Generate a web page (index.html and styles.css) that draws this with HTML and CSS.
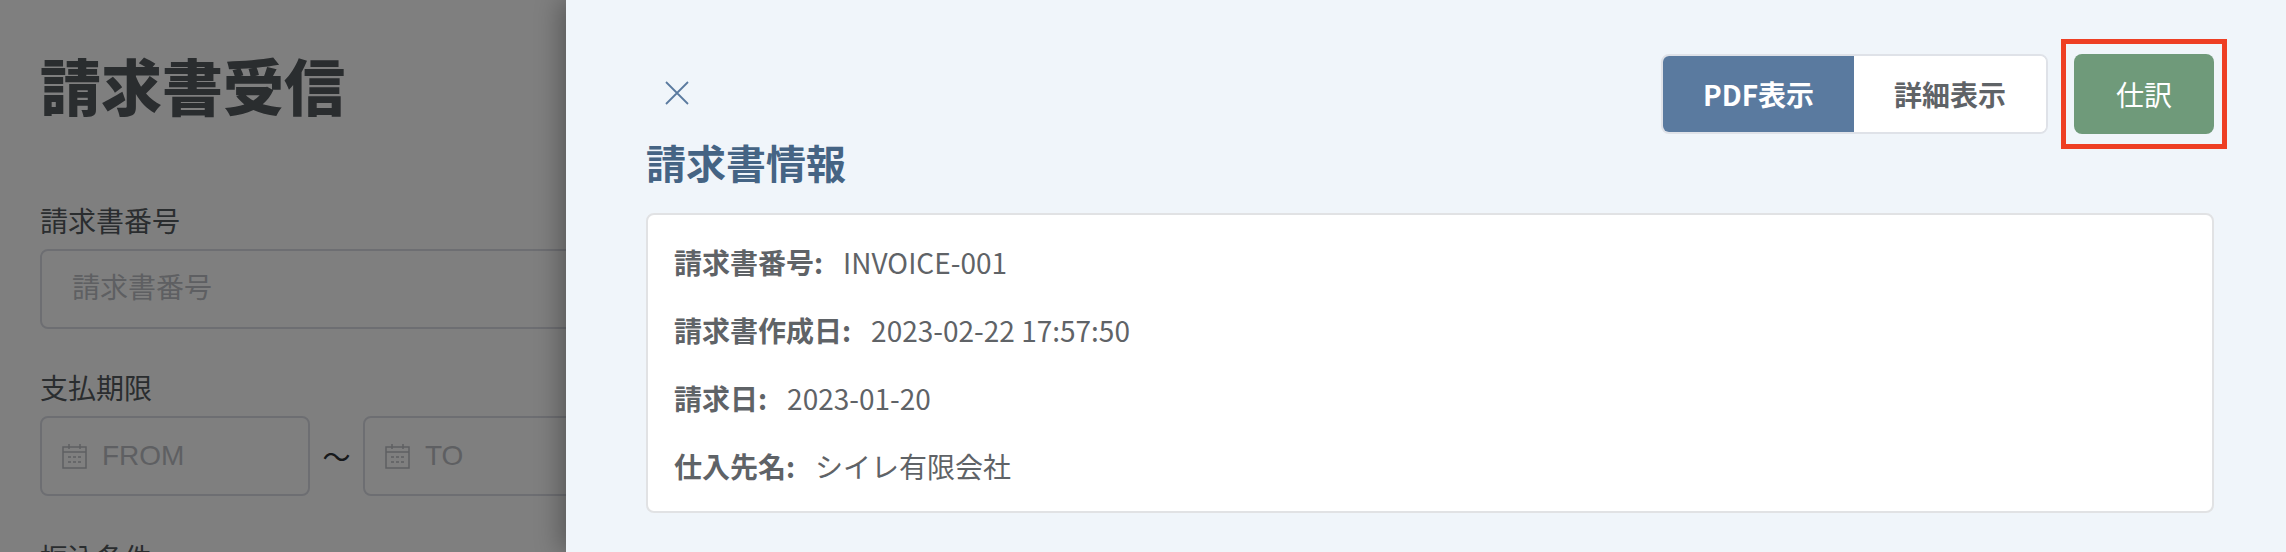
FILE: index.html
```html
<!DOCTYPE html>
<html lang="ja">
<head>
    <meta charset="UTF-8">
    <title>請求書受信</title>
    <link rel="stylesheet" href="styles.css">
</head>
<body>
    <!-- Search form behind the drawer -->
    <section class="page">
        <h1>請求書受信</h1>
        <label class="field-label">請求書番号</label>
        <div class="input wide"><span>請求書番号</span></div>
        <label class="field-label">支払期限</label>
        <div class="date-row">
            <div class="input date">
                <svg class="cal" viewBox="0 0 25 25" fill="none" stroke="currentColor" stroke-width="1.5">
                    <rect x="1" y="3" width="23" height="21"/>
                    <path d="M1 8h23M7 0v5M18 0v5"/>
                    <path d="M6 13h3M11 13h3M16 13h3M6 18h3M11 18h3M16 18h3" stroke-width="1.4"/>
                </svg>
                <span class="latin">FROM</span>
            </div>
            <span class="tilde">〜</span>
            <div class="input date grow">
                <svg class="cal" viewBox="0 0 25 25" fill="none" stroke="currentColor" stroke-width="1.5">
                    <rect x="1" y="3" width="23" height="21"/>
                    <path d="M1 8h23M7 0v5M18 0v5"/>
                    <path d="M6 13h3M11 13h3M16 13h3M6 18h3M11 18h3M16 18h3" stroke-width="1.4"/>
                </svg>
                <span class="latin">TO</span>
            </div>
        </div>
        <label class="field-label">振込条件</label>
        <div class="scrim"></div>
    </section>

    <!-- Drawer -->
    <aside class="drawer">
        <div class="drawer-head">
            <button class="close" aria-label="閉じる">
                <svg viewBox="0 0 24 24" fill="none" stroke="currentColor" stroke-width="1.8">
                    <path d="M1 1l22 22M23 1L1 23"/>
                </svg>
            </button>
            <div class="actions">
                <div class="toggle">
                    <button class="toggle-btn active">PDF表示</button>
                    <button class="toggle-btn">詳細表示</button>
                </div>
                <div class="highlight">
                    <button class="journal">仕訳</button>
                </div>
            </div>
        </div>
        <h2>請求書情報</h2>
        <div class="card">
            <p><b>請求書番号:</b><span>INVOICE-001</span></p>
            <p><b>請求書作成日:</b><span>2023-02-22 17:57:50</span></p>
            <p><b>請求日:</b><span>2023-01-20</span></p>
            <p><b>仕入先名:</b><span>シイレ有限会社</span></p>
        </div>
    </aside>
</body>
</html>
```

FILE: styles.css
```css
* {
    box-sizing: border-box;
}
body {
    margin: 0;
    height: 552px;
    display: flex;
    overflow: hidden;
    font-family: "Noto Sans CJK JP", "Noto Sans", sans-serif;
    background: #fff;
}

/* Page behind the drawer */
.page {
    position: relative;
    flex: 0 0 566px;
    height: 552px;
    overflow: hidden;
    padding: 43px 0 0 40px;
    color: #555a5e;
}
h1 {
    margin: 0 0 73px;
    font-size: 61px;
    line-height: 84px;
    font-weight: 900;
}
.field-label {
    display: block;
    font-size: 28px;
    line-height: 40px;
    margin-bottom: 9px;
}
.input {
    height: 80px;
    border: 2px solid #dbdde4;
    border-radius: 8px;
    display: flex;
    align-items: center;
    color: #bcbec4;
    font-size: 28px;
}
.wide {
    width: 800px;
    padding: 0 0 6px 30px;
    margin-bottom: 38px;
}
.date-row {
    display: flex;
    align-items: center;
    width: 800px;
    margin-bottom: 41px;
}
.date {
    width: 270px;
    padding-left: 20px;
}
.grow {
    flex: 1;
}
.cal {
    width: 25px;
    height: 25px;
    margin-right: 15px;
}
.latin {
    font-family: "Liberation Sans", Arial, sans-serif;
}
.tilde {
    width: 53px;
    text-align: center;
    font-size: 28px;
    color: #2f3236;
}
.scrim {
    position: absolute;
    inset: 0;
    background: rgba(0, 0, 0, 0.5);
}

/* Drawer */
.drawer {
    position: relative;
    flex: 1;
    height: 552px;
    padding: 54px 72px 0 80px;
    background: #f0f5fa;
    box-shadow: -6px 0 24px rgba(0, 0, 0, 0.3);
    color: #5f6367;
}
.drawer-head {
    display: flex;
    justify-content: space-between;
    align-items: flex-start;
}
button {
    font-family: inherit;
    border: none;
    cursor: pointer;
}
.close {
    width: 24px;
    height: 24px;
    margin: 27px 0 0 19px;
    padding: 0;
    background: none;
    color: #5a7a9f;
}
.close svg {
    display: block;
    width: 24px;
    height: 24px;
}
.actions {
    display: flex;
}
.toggle {
    display: flex;
    width: 387px;
    height: 80px;
    margin-right: 26px;
    background: #fff;
    border: 2px solid #dfe2e8;
    border-radius: 8px;
    overflow: hidden;
}
.toggle-btn {
    flex: 1;
    padding: 0;
    background: #fff;
    color: #5f6367;
    font-size: 28px;
    font-weight: 700;
}
.toggle-btn.active {
    flex: 0 0 191px;
    background: #5a7a9f;
    color: #fff;
}
.highlight {
    margin: -15px -13px -15px -13px;
    padding: 10px 8px;
    border: 5px solid #ee3f24;
}
.journal {
    display: block;
    width: 140px;
    height: 80px;
    background: #6f9a7a;
    color: #fff;
    border-radius: 8px;
    font-size: 28px;
}
h2 {
    margin: 0 0 23px;
    font-size: 40px;
    line-height: 56px;
    font-weight: 700;
    color: #456484;
    position: relative;
}
.card {
    padding: 13px 26px 11px;
    background: #fff;
    border: 2px solid #e1e2e4;
    border-radius: 8px;
}
.card p {
    margin: 0;
    height: 68px;
    display: flex;
    align-items: center;
    font-size: 28px;
}
.card b {
    font-weight: 700;
    margin-right: 20px;
}
```
